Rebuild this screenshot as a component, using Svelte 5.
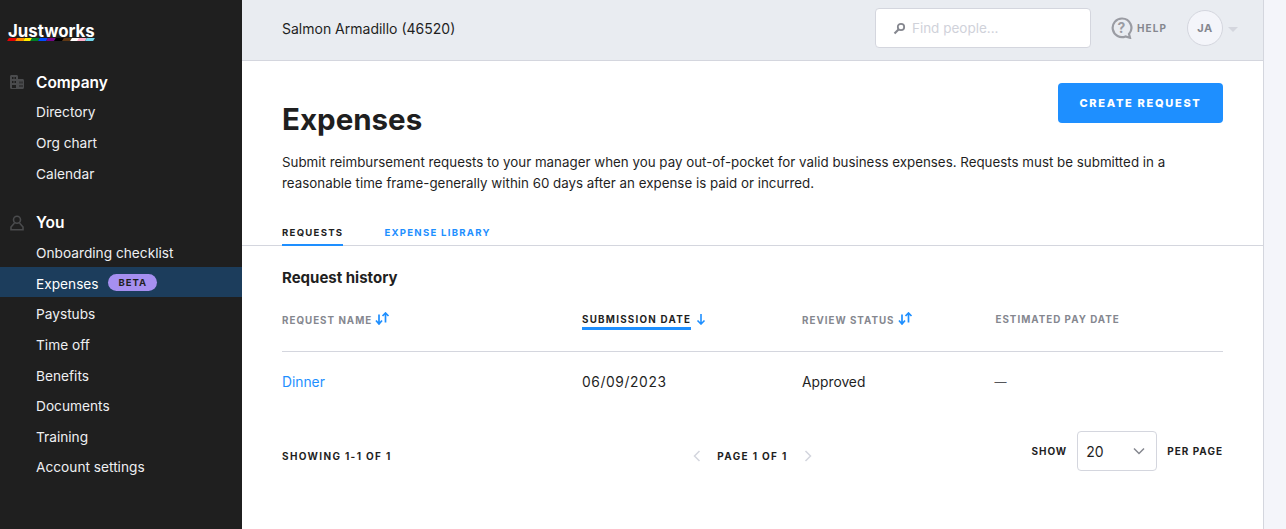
<script lang="ts">
	type NavGroup = { title: string; icon: string; items: string[] };

	const groups: NavGroup[] = [
		{ title: 'Company', icon: 'building', items: ['Directory', 'Org chart', 'Calendar'] },
		{
			title: 'You',
			icon: 'person',
			items: ['Onboarding checklist', 'Expenses', 'Paystubs', 'Time off', 'Benefits', 'Documents', 'Training', 'Account settings']
		}
	];

	const stripes = ['#e40303', '#ff8c00', '#ffed00', '#008026', '#004dff', '#750787', '#000', '#613915', '#fff', '#ffafc8', '#74d7ee'];
</script>

<div class="shell">
	<aside class="sidebar">
		<div class="logo">
			<span class="logoText">Justworks</span>
			<div class="pride">
				{#each stripes as color}
					<span style="background: {color}"></span>
				{/each}
			</div>
		</div>

		{#each groups as group}
			<div class="navGroup">
				<div class="navTitle">
					{#if group.icon === 'building'}
						<svg width="16" height="16" viewBox="0 0 16 16" fill="#4a4b4d">
							<path d="M1 2.500C1 1.600 1.600 1 2.500 1h5C8.400 1 9 1.600 9 2.500V5h4.500c.9 0 1.500.6 1.500 1.500v7c0 .9-.6 1.500-1.500 1.500h-11C1.600 15 1 14.400 1 13.500z" />
							<path fill="#1f1f1f" d="M3 3h1.500v2H3zM5.500 3H7v2H5.500zM3 7h1.500v2H3zM5.500 7H7v2H5.500zM3 11h4v3H3zM10.500 7.500h1v2h-1zM10.500 11h1v2h-1zM12.500 7.500h1v2h-1zM12.500 11h1v2h-1z" />
						</svg>
					{:else}
						<svg width="16" height="16" viewBox="0 0 16 16" fill="none" stroke="#4a4b4d" stroke-width="1.600">
							<circle cx="8" cy="4.800" r="3.500" />
							<path d="M5.500 8 2 12v2.800h12V12L10.500 8" />
						</svg>
					{/if}
					<span>{group.title}</span>
				</div>
				{#each group.items as item}
					<div class="navItem" class:active={item === 'Expenses'}>
						{item}
						{#if item === 'Expenses'}
							<span class="beta">BETA</span>
						{/if}
					</div>
				{/each}
			</div>
		{/each}
	</aside>

	<div class="main">
		<header class="topbar">
			<div class="company">Salmon Armadillo (46520)</div>
			<div class="search">
				<svg width="13" height="13" viewBox="0 0 13 13" fill="none" stroke="#85878f" stroke-width="1.800">
					<circle cx="8" cy="5" r="3.200" />
					<path d="M5.500 7.500 1.500 11.500" stroke-width="2.200" />
				</svg>
				<span>Find people...</span>
			</div>
			<div class="help">
				<svg width="22" height="22" viewBox="0 0 22 22" fill="none">
					<path d="M11 1.500a9.300 9.300 0 1 0 3.500 17.900l4.500 1.400-1-3.800A9.300 9.300 0 0 0 11 1.500z" stroke="#9a9ca3" stroke-width="2.200" />
					<text x="11" y="15.500" text-anchor="middle" class="helpMark">?</text>
				</svg>
				<span>HELP</span>
			</div>
			<div class="avatar">JA</div>
			<div class="caret"></div>
		</header>

		<section class="content">
			<div class="titleRow">
				<h1>Expenses</h1>
				<div class="createBtn">CREATE REQUEST</div>
			</div>
			<p class="intro">
				Submit reimbursement requests to your manager when you pay out-of-pocket for valid business expenses. Requests must be submitted in a reasonable time frame-generally within 60 days after an expense is paid or incurred.
			</p>

			<div class="tabs">
				<div class="tab current">REQUESTS</div>
				<div class="tab">EXPENSE LIBRARY</div>
			</div>

			<div class="history">
				<h2>Request history</h2>

				<div class="row headRow">
					<div class="th">REQUEST NAME {@render sortBoth()}</div>
					<div class="th sorted">
						<span>SUBMISSION DATE</span>
						<svg class="downIcon" width="10" height="12" viewBox="0 0 10 12" fill="none" stroke="#1e8fff" stroke-width="1.600">
							<path d="M5 1v10M1.500 7.500 5 11l3.500-3.500" />
						</svg>
					</div>
					<div class="th">REVIEW STATUS {@render sortBoth()}</div>
					<div class="th plain">ESTIMATED PAY DATE</div>
				</div>

				<div class="row bodyRow">
					<div class="link">Dinner</div>
					<div class="date">06/09/2023</div>
					<div>Approved</div>
					<div class="empty">—</div>
				</div>

				<div class="pager">
					<div class="pagerLabel lower">SHOWING 1-1 OF 1</div>
					<div class="pages lower">
						<svg width="8" height="12" viewBox="0 0 8 12" fill="none" stroke="#d4d6de" stroke-width="1.500"><path d="M6.500 1 1.500 6l5 5" /></svg>
						<span class="pagerLabel">PAGE 1 OF 1</span>
						<svg width="8" height="12" viewBox="0 0 8 12" fill="none" stroke="#d4d6de" stroke-width="1.500"><path d="M1.500 1l5 5-5 5" /></svg>
					</div>
					<div class="perPage">
						<span class="pagerLabel">SHOW</span>
						<div class="select">
							<span>20</span>
							<svg width="12" height="8" viewBox="0 0 12 8" fill="none" stroke="#85878f" stroke-width="1.500"><path d="M1 1.500l5 5 5-5" /></svg>
						</div>
						<span class="pagerLabel">PER PAGE</span>
					</div>
				</div>
			</div>
		</section>
	</div>

	<div class="rail"></div>
</div>

{#snippet sortBoth()}
	<svg class="sortIcon" width="15" height="13" viewBox="0 0 15 13" fill="none" stroke="#1e8fff" stroke-width="1.700">
		<path d="M4 2.500V12M1 8.500 4 12l3-3.500" />
		<path d="M10.500 10.500V1M7.500 4l3-3 3 3" />
	</svg>
{/snippet}

<style>
	:global(body) {
		background: #fff;
	}

	.shell {
		display: flex;
		height: 529px;
		overflow: hidden;
		font-family: Inter, 'Liberation Sans', sans-serif;
		color: #1f1f1f;
	}

	.sidebar {
		width: 242px;
		flex: none;
		background: #1f1f1f;
		color: #eeeff2;
		font-size: 13.700px;
	}

	.logo {
		width: 86px;
		margin: 22px 0 0 8px;
		height: 51px;
	}

	.logoText {
		display: block;
		color: #fff;
		font-size: 16.800px;
		font-weight: 700;
		line-height: 19px;
	}

	.pride {
		display: flex;
		height: 3px;
		margin-top: -3px;
		position: relative;
	}

	.pride span {
		flex: 1;
		transform: skewX(-30deg);
	}

	.navGroup {
		margin-bottom: 26.600px;
	}

	.navTitle {
		display: flex;
		align-items: center;
		height: 18px;
		padding-left: 9px;
		margin-bottom: 4.400px;
		font-size: 15.500px;
		font-weight: 600;
		color: #fff;
	}

	.navTitle span {
		margin-left: 11px;
	}

	.navItem {
		height: 30.600px;
		box-sizing: border-box;
		padding: 2px 0 0 36px;
		line-height: 30.600px;
	}

	.navItem.active {
		background: #1c3d5c;
		color: #fff;
	}

	.beta {
		display: inline-block;
		margin-left: 6px;
		padding: 0 10px;
		height: 17px;
		line-height: 17px;
		border-radius: 9px;
		background: #a68ff0;
		color: #1f1f1f;
		font-size: 9.500px;
		font-weight: 700;
		letter-spacing: 1px;
		vertical-align: 3px;
	}

	.main {
		flex: 1;
		min-width: 0;
		display: flex;
		flex-direction: column;
	}

	.topbar {
		display: flex;
		align-items: center;
		flex: none;
		height: 61px;
		padding: 0 0 4px 40px;
		background: #e9ecf1;
		border-bottom: 1px solid #d4d6de;
		box-sizing: border-box;
		font-size: 14px;
	}

	.company {
		flex: 1;
	}

	.search {
		display: flex;
		align-items: center;
		gap: 6px;
		width: 216px;
		height: 40px;
		box-sizing: border-box;
		padding-left: 17px;
		background: #fff;
		border: 1px solid #d4d6de;
		border-radius: 4px;
		color: #d0d2da;
		font-size: 13.500px;
	}

	.help {
		display: flex;
		align-items: center;
		gap: 4px;
		margin-left: 20px;
		font-size: 10px;
		font-weight: 700;
		letter-spacing: 1.100px;
		color: #85878f;
	}

	.helpMark {
		font-size: 14px;
		font-weight: 700;
		fill: #9a9ca3;
	}

	.avatar {
		display: flex;
		align-items: center;
		justify-content: center;
		width: 36px;
		height: 36px;
		margin-left: 20px;
		box-sizing: border-box;
		border: 1px solid #d4d6de;
		border-radius: 50%;
		background: #f4f5fa;
		color: #85878f;
		font-size: 11px;
		font-weight: 700;
		letter-spacing: 0.5px;
	}

	.caret {
		width: 0;
		height: 0;
		margin: 3px 25px 0 5px;
		border: 5px solid transparent;
		border-top: 5px solid #d4d6de;
		border-bottom: 0;
	}

	.content {
		padding: 22px 40px 0;
	}

	.titleRow {
		display: flex;
		justify-content: space-between;
		align-items: flex-start;
	}

	h1 {
		margin: 16px 0 0;
		font-size: 29.500px;
		line-height: 40px;
		font-weight: 700;
	}

	.createBtn {
		display: flex;
		align-items: center;
		justify-content: center;
		width: 165px;
		height: 40px;
		background: #1e8fff;
		border-radius: 4px;
		color: #fff;
		font-size: 11px;
		font-weight: 800;
		letter-spacing: 1.700px;
	}

	.intro {
		margin: 13px 0 0;
		font-size: 13.350px;
		line-height: 21px;
	}

	.tabs {
		display: flex;
		gap: 41px;
		margin: 29px -40px 0;
		padding: 0 40px;
		border-bottom: 1px solid #d4d6de;
	}

	.tab {
		height: 21px;
		line-height: 20px;
		font-size: 9.600px;
		font-weight: 700;
		letter-spacing: 1.250px;
		color: #1e8fff;
	}

	.tab.current {
		color: #1f1f1f;
		border-bottom: 2px solid #1e8fff;
		margin-bottom: -1px;
	}

	.history {
		padding-top: 22px;
	}

	h2 {
		margin: 0;
		font-size: 15px;
		line-height: 20px;
		font-weight: 700;
	}

	.row {
		display: grid;
		grid-template-columns: 300px 220px 192.500px 1fr;
		align-items: center;
	}

	.headRow {
		height: 54px;
		margin-top: 10px;
		border-bottom: 1px solid #d4d6de;
		padding-bottom: 8px;
		box-sizing: border-box;
	}

	.th {
		display: flex;
		align-items: center;
		gap: 3px;
		font-size: 9.800px;
		font-weight: 700;
		letter-spacing: 1px;
		color: #85878f;
	}

	.sortIcon {
		margin-top: -4px;
	}

	.th.sorted {
		color: #1f1f1f;
		gap: 5px;
		letter-spacing: 1.250px;
	}

	.th.sorted span {
		border-bottom: 3px solid #1e8fff;
		padding-bottom: 2px;
		margin-top: 3px;
	}

	.downIcon {
		margin-top: -3px;
	}

	.th.plain {
		margin-top: -2px;
		padding-left: 1px;
	}

	.bodyRow {
		height: 61px;
		padding-bottom: 2px;
		box-sizing: border-box;
		font-size: 13.800px;
	}

	.date {
		letter-spacing: 0.6px;
	}

	.empty {
		font-size: 12px;
		color: #55565a;
	}

	.link {
		color: #1e8fff;
	}

	.pager {
		display: grid;
		grid-template-columns: 1fr auto 1fr;
		align-items: center;
		margin-top: 18px;
	}

	.pagerLabel {
		font-size: 10px;
		font-weight: 700;
		letter-spacing: 1.350px;
	}

	.lower {
		margin-top: 10px;
	}

	.pages {
		display: flex;
		align-items: center;
		gap: 16px;
	}

	.perPage {
		display: flex;
		align-items: center;
		justify-content: flex-end;
		gap: 10px;
	}

	.perPage .pagerLabel {
		letter-spacing: 1px;
	}

	.select {
		display: flex;
		align-items: center;
		justify-content: space-between;
		width: 80px;
		height: 40px;
		box-sizing: border-box;
		padding: 0 11px 0 8px;
		border: 1px solid #d4d6de;
		border-radius: 4px;
		font-size: 14px;
	}

	.rail {
		width: 23px;
		flex: none;
		background: #f4f5fa;
		border-left: 1px solid #d4d6de;
		box-sizing: border-box;
	}
</style>
